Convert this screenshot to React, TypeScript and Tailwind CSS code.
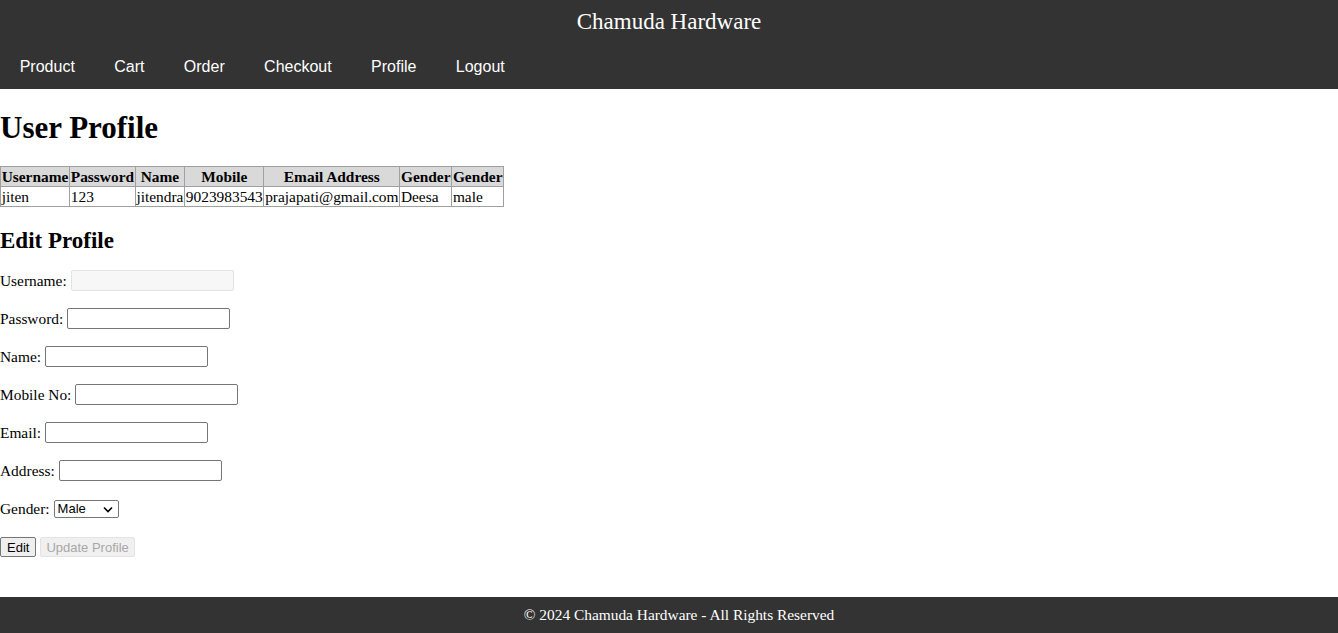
import React from "react";

const links = ["Product", "Cart", "Order", "Checkout", "Profile", "Logout"];

const headers = ["Username", "Password", "Name", "Mobile", "Email Address", "Gender", "Gender"];
const row = ["jiten", "123", "jitendra", "9023983543", "prajapati@gmail.com", "Deesa", "male"];

const fields = [
  { label: "Username:", disabled: true },
  { label: "Password:" },
  { label: "Name:" },
  { label: "Mobile No:" },
  { label: "Email:" },
  { label: "Address:" },
];

export default function App() {
  return (
    <div className="flex min-h-screen flex-col bg-white font-['Liberation_Serif',serif] text-[15.4px] text-black">
      <header className="bg-[#333333] text-white">
        <div className="flex h-[45px] items-center justify-center pb-[3px] text-[23px] leading-none">Chamuda Hardware</div>
        <nav className="flex h-[44px] items-center font-['Liberation_Sans',Arial,sans-serif]">
          {links.map((l) => (
            <a key={l} href="#" className="px-[19.7px] text-[16px] text-white">
              {l}
            </a>
          ))}
        </nav>
      </header>

      <main>
        <h1 className="mt-[20px] mb-[20px] text-[31px] leading-[37px] font-bold">User Profile</h1>

        <table className="border-collapse border border-[#a0a0a0] leading-[19px]">
          <thead>
            <tr className="bg-[#d9d9d9]">
              {headers.map((h, i) => (
                <th key={i} className="border border-[#a0a0a0] px-[0.7px] font-bold">
                  {h}
                </th>
              ))}
            </tr>
          </thead>
          <tbody>
            <tr>
              {row.map((c, i) => (
                <td key={i} className="border border-[#a0a0a0] px-[0.7px] text-left">
                  {c}
                </td>
              ))}
            </tr>
          </tbody>
        </table>

        <h2 className="mt-[20px] mb-[14px] text-[23px] leading-[28px] font-bold">Edit Profile</h2>

        <form className="flex flex-col gap-[15px]" onSubmit={(e) => e.preventDefault()}>
          {fields.map((f) => (
            <div key={f.label} className="flex h-[23px] items-center">
              <label>{f.label}</label>
              <input
                type="text"
                disabled={f.disabled}
                className={
                  f.disabled
                    ? "ml-[4px] h-[21px] w-[163px] rounded-[2px] border border-[#e3e3e3] bg-[#f7f7f7]"
                    : "ml-[4px] h-[21px] w-[163px] rounded-[2px] border border-[#767676] bg-white"
                }
              />
            </div>
          ))}
          <div className="flex h-[23px] items-center">
            <label>Gender:</label>
            <div className="relative ml-[4px] flex h-[18px] w-[65px] items-center rounded-[2px] border border-[#767676] bg-white pl-[3px] font-['Liberation_Sans',Arial,sans-serif] text-[13px]">
              Male
              <svg className="absolute right-[5px] top-[5px]" width="10" height="7" viewBox="0 0 10 7">
                <path d="M1 1.5 L5 5.5 L9 1.5" fill="none" stroke="#000" strokeWidth="1.6" />
              </svg>
            </div>
          </div>
          <div className="flex h-[23px] items-center gap-[4px] font-['Liberation_Sans',Arial,sans-serif] text-[13px]">
            <button type="button" className="h-[20px] rounded-[2px] border border-[#767676] bg-[#efefef] px-[6px] text-black">
              Edit
            </button>
            <button type="button" disabled className="h-[20px] rounded-[2px] border border-[#e3e3e3] bg-[#f0f0f0] px-[5px] text-[#a8a8a8]">
              Update Profile
            </button>
          </div>
        </form>
      </main>

      <footer className="mt-auto flex h-[36px] items-center justify-center bg-[#333333] pl-[20px] text-white">
        © 2024 Chamuda Hardware - All Rights Reserved
      </footer>
    </div>
  );
}
